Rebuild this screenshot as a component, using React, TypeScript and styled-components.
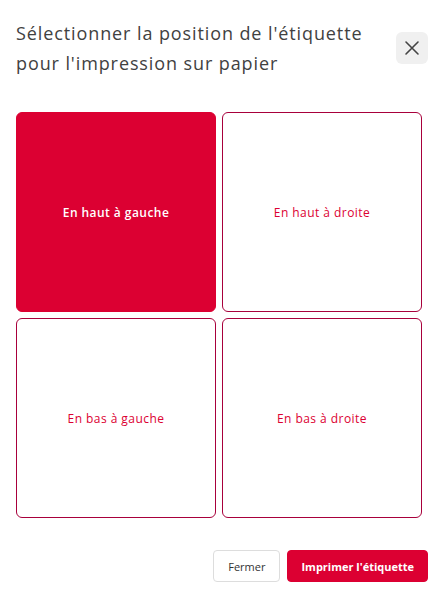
import React, { useState } from 'react';
import styled, { createGlobalStyle } from 'styled-components';

const GlobalStyle = createGlobalStyle`
  body {
    margin: 0;
    background: #ffffff;
    font-family: "Open Sans", "Noto Sans", sans-serif;
  }
`;

const Dialog = styled.div`
  width: 445px;
  height: 591px;
  box-sizing: border-box;
  padding: 18px 17px 0 16px;
  background: #ffffff;
`;

const Header = styled.div`
  display: flex;
  justify-content: space-between;
  align-items: flex-start;
`;

const Title = styled.h2`
  margin: 0;
  width: 376px;
  font-size: 18px;
  font-weight: 500;
  line-height: 30px;
  letter-spacing: 0.9px;
  color: #414141;
`;

const CloseButton = styled.button`
  margin-top: 14px;
  width: 32px;
  height: 32px;
  padding: 0;
  border: none;
  border-radius: 6px;
  background: #f0f0f0;
  display: flex;
  align-items: center;
  justify-content: center;
  cursor: pointer;
`;

const PositionGrid = styled.div`
  margin-top: 34px;
  display: grid;
  grid-template-columns: 200px 200px;
  grid-auto-rows: 200px;
  gap: 6px;
`;

const Tile = styled.button<{ $selected: boolean }>`
  box-sizing: border-box;
  padding: 0;
  border: 1px solid ${p => (p.$selected ? '#dc0032' : '#a8003b')};
  border-radius: 6px;
  background: ${p => (p.$selected ? '#dc0032' : '#ffffff')};
  color: ${p => (p.$selected ? '#ffffff' : '#dc0032')};
  font-family: "Open Sans", "Noto Sans", sans-serif;
  font-size: 12px;
  letter-spacing: 0.45px;
  font-weight: ${p => (p.$selected ? 600 : 400)};
  cursor: pointer;
`;

const Footer = styled.div`
  margin-top: 32px;
  display: flex;
  justify-content: flex-end;
  gap: 7px;
`;

const FooterButton = styled.button<{ $primary?: boolean }>`
  height: 32px;
  box-sizing: border-box;
  padding: 0 ${p => (p.$primary ? '13px' : '14px')};
  border: 1px solid ${p => (p.$primary ? '#dc0032' : '#dddddd')};
  border-radius: 4px;
  background: ${p => (p.$primary ? '#dc0032' : '#ffffff')};
  color: ${p => (p.$primary ? '#ffffff' : '#333333')};
  font-family: "Open Sans", "Noto Sans", sans-serif;
  font-size: 11px;
  font-weight: ${p => (p.$primary ? 700 : 500)};
  cursor: pointer;
`;

const positions = [
  'En haut à gauche',
  'En haut à droite',
  'En bas à gauche',
  'En bas à droite',
];

export default function App() {
  const [selected, setSelected] = useState(0);

  return (
    <>
      <GlobalStyle />
      <Dialog>
        <Header>
          <Title>Sélectionner la position de l'étiquette pour l'impression sur papier</Title>
          <CloseButton aria-label="Fermer">
            <svg width="16" height="16" viewBox="0 0 16 16" fill="none">
              <path d="M2 2L14 14M14 2L2 14" stroke="#444444" strokeWidth="1.6" strokeLinecap="round" />
            </svg>
          </CloseButton>
        </Header>

        <PositionGrid>
          {positions.map((label, i) => (
            <Tile key={label} $selected={selected === i} onClick={() => setSelected(i)}>
              {label}
            </Tile>
          ))}
        </PositionGrid>

        <Footer>
          <FooterButton>Fermer</FooterButton>
          <FooterButton $primary>Imprimer l'étiquette</FooterButton>
        </Footer>
      </Dialog>
    </>
  );
}
